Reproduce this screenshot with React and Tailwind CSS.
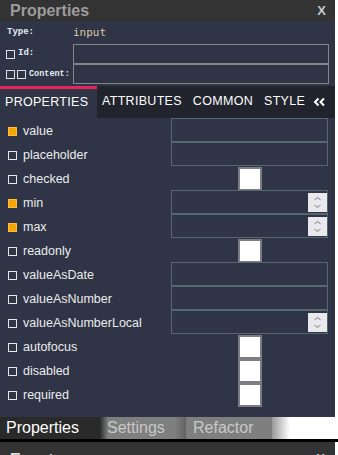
import React from "react";

const rows = [
  { label: "value", on: true, kind: "text" },
  { label: "placeholder", on: false, kind: "text" },
  { label: "checked", on: false, kind: "check" },
  { label: "min", on: true, kind: "number" },
  { label: "max", on: true, kind: "number" },
  { label: "readonly", on: false, kind: "check" },
  { label: "valueAsDate", on: false, kind: "text" },
  { label: "valueAsNumber", on: false, kind: "text" },
  { label: "valueAsNumberLocal", on: false, kind: "number" },
  { label: "autofocus", on: false, kind: "check" },
  { label: "disabled", on: false, kind: "check" },
  { label: "required", on: false, kind: "check" },
];

function Spinner() {
  return (
    <div className="ml-auto mr-0 mt-[2px] w-[19px] h-[19px] bg-[#e9e9ed] flex items-center justify-center self-start">
      <svg width="11" height="15" viewBox="0 0 11 15">
        <path d="M2.5 5 L5.5 2.5 L8.5 5" fill="none" stroke="#a0a0a6" strokeWidth="1.1" />
        <path d="M2.5 10 L5.5 12.5 L8.5 10" fill="none" stroke="#a0a0a6" strokeWidth="1.1" />
      </svg>
    </div>
  );
}

function Row({ r }) {
  return (
    <div className="grid grid-cols-[171px_157px] h-[24px]">
      <div className="flex items-center pl-[8px] pt-[2px]">
        <div
          className={
            r.on
              ? "w-[9px] h-[9px] bg-[#f7a600] border border-[#fbbd45]"
              : "w-[9px] h-[9px] border border-[#e8e8e8]"
          }
        />
        <span className="ml-[6px] text-[12.5px] text-[#ececec] leading-none">{r.label}</span>
      </div>
      {r.kind === "check" ? (
        <div className="flex justify-center items-center">
          <div className="w-[24px] h-[24px] bg-white border-2 border-[#7c7c84] mt-[1px]" />
        </div>
      ) : (
        <div className="h-[24px] border border-[#56676f] flex">
          {r.kind === "number" ? <Spinner /> : null}
        </div>
      )}
    </div>
  );
}

export default function App() {
  return (
    <div className="w-[338px] h-[455px] bg-white overflow-hidden font-['Liberation_Sans',Arial,sans-serif]">
      <div className="w-[335px] bg-[#2f3446]">
        <div className="h-[21px] bg-[#333333] flex items-center justify-between pl-[10px] pr-[9px]">
          <span className="text-[16px] font-bold text-[#9c9c9c] leading-none">Properties</span>
          <span className="text-[13px] font-bold text-[#c3cbd3] leading-none">X</span>
        </div>
        <div className="h-[23px] flex items-center">
          <span className="pl-[7px] w-[73px] text-[9px] font-bold text-[#e4ebf5] font-['Liberation_Mono',monospace]">Type:</span>
          <span className="text-[11px] text-[#d8cca2] font-['DejaVu_Sans_Mono',monospace] leading-none">input</span>
        </div>
        <div className="h-[20px] flex items-center">
          <div className="w-[73px] flex items-center pl-[6px]">
            <div className="w-[9px] h-[9px] border border-[#e0e0e0]" />
            <span className="ml-[3px] text-[9px] font-bold text-[#e4ebf5] font-['Liberation_Mono',monospace]">Id:</span>
          </div>
          <div className="w-[256px] h-[20px] border border-[#858585]" />
        </div>
        <div className="h-[20px] flex items-center">
          <div className="w-[73px] flex items-center pl-[6px]">
            <div className="w-[9px] h-[9px] border border-[#e0e0e0]" />
            <div className="ml-[2px] w-[9px] h-[9px] border border-[#e0e0e0]" />
            <span className="ml-[3px] text-[8.5px] font-bold text-[#e4ebf5] font-['Liberation_Mono',monospace]">Content:</span>
          </div>
          <div className="w-[256px] h-[20px] border border-[#858585]" />
        </div>
        <div className="h-[2px]" />
        <div className="h-[32px] flex bg-[#21242d] text-[12.5px] tracking-[0.3px] text-white">
          <div className="w-[97px] border-t-[3px] border-[#e8245d] bg-[#2f3446] flex items-center pl-[5px] pb-[2px]">PROPERTIES</div>
          <div className="flex items-center pl-[5px] pb-[2px]">ATTRIBUTES</div>
          <div className="flex items-center pl-[11px] pb-[2px]">COMMON</div>
          <div className="flex items-center pl-[11px] pb-[2px]">STYLE</div>
          <div className="flex items-center pl-[8px] pb-[1px]">
            <svg width="13" height="10" viewBox="0 0 13 10">
              <path d="M5.5 1.5 L2 5 L5.5 8.5 M11 1.5 L7.5 5 L11 8.5" fill="none" stroke="#ffffff" strokeWidth="2" />
            </svg>
          </div>
        </div>
        <div>
          {rows.map((r) => (
            <Row key={r.label} r={r} />
          ))}
        </div>
        <div className="h-[11px]" />
      </div>
      <div className="h-[22px] flex items-stretch bg-white">
        <div className="w-[100px] bg-[#2a2a2a] text-white text-[16px] flex items-center pl-[6px]">Properties</div>
        <div className="w-[86px] bg-[linear-gradient(to_right,#2e2e2e_0px,#7f7f7f_8px,#7f7f7f_75px,#626262_86px)] text-[#c8c8c8] text-[16px] flex items-center pl-[7px]">Settings</div>
        <div className="w-[86px] bg-[#7f7f7f] text-[#c8c8c8] text-[16px] flex items-center pl-[7px]">Refactor</div>
        <div className="w-[18px] bg-[linear-gradient(to_right,#9a9a9a,#ffffff)]" />
      </div>
      <div className="h-[3px] bg-black w-[338px]" />
      <div className="h-[20px] w-[335px] bg-[#333333] flex justify-between pl-[10px] pr-[10px] pt-[10px]">
        <span className="text-[16px] font-bold text-[#e0e0e0] leading-none">Events</span>
        <span className="text-[13px] font-bold text-[#c3cbd3] leading-none">X</span>
      </div>
    </div>
  );
}
